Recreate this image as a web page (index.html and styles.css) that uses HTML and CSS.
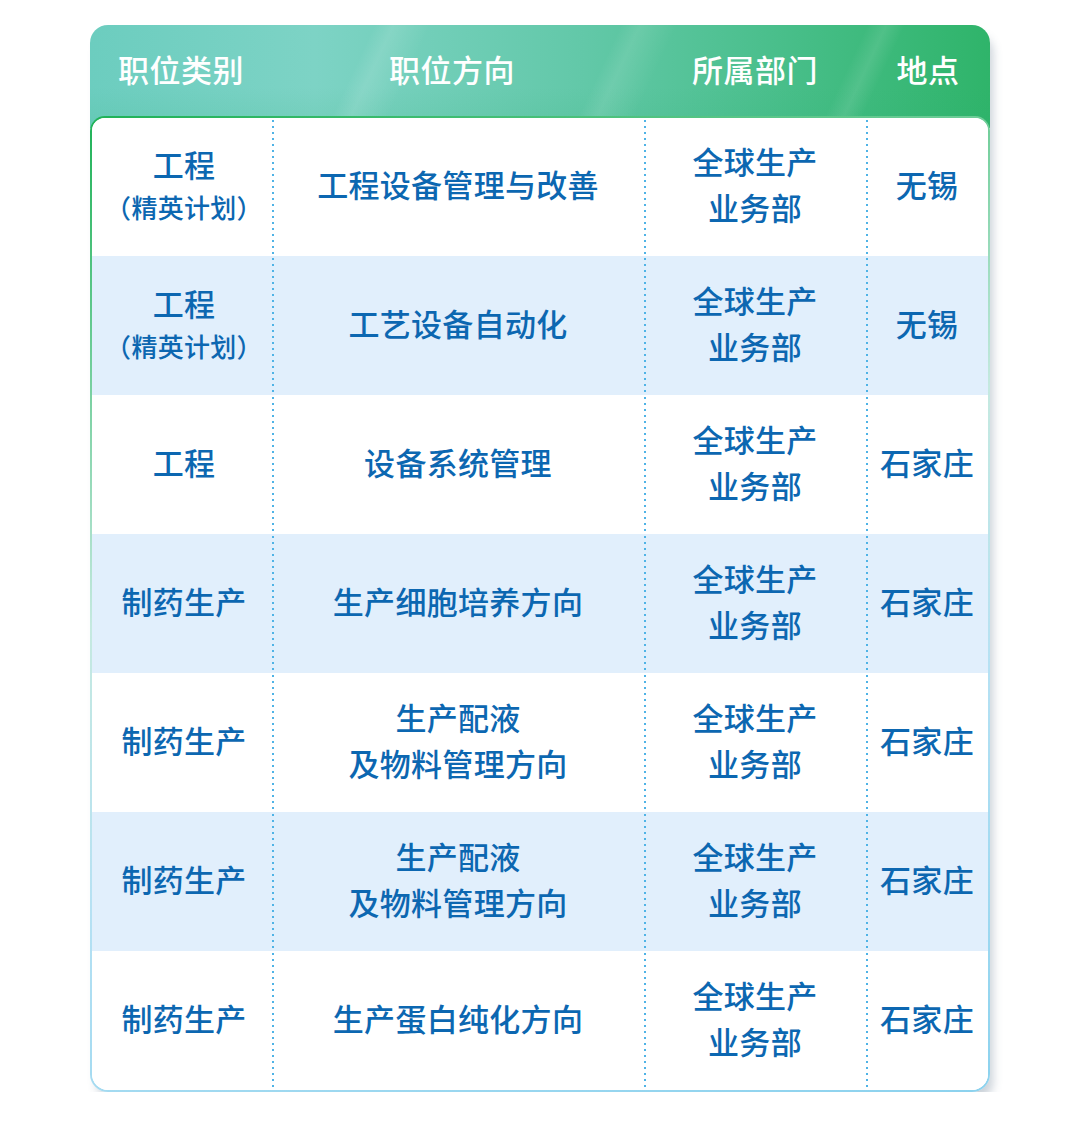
FILE: index.html
```html
<!DOCTYPE html>
<html lang="zh">
<head>
<meta charset="utf-8">
<link rel="stylesheet" href="styles.css">
</head>
<body>
<div class="page">
  <div class="card">
    <div class="head">
      <div class="hc">职位类别</div>
      <div class="hc h2">职位方向</div>
      <div class="hc">所属部门</div>
      <div class="hc">地点</div>
    </div>
    <div class="body">
      <div class="row first">
        <div class="c f"><span>工程</span><span class="sm">（精英计划）</span></div>
        <div class="c d">工程设备管理与改善</div>
        <div class="c d">全球生产<br>业务部</div>
        <div class="c d">无锡</div>
      </div>
      <div class="row alt">
        <div class="c f"><span>工程</span><span class="sm">（精英计划）</span></div>
        <div class="c d">工艺设备自动化</div>
        <div class="c d">全球生产<br>业务部</div>
        <div class="c d">无锡</div>
      </div>
      <div class="row">
        <div class="c f">工程</div>
        <div class="c d">设备系统管理</div>
        <div class="c d">全球生产<br>业务部</div>
        <div class="c d">石家庄</div>
      </div>
      <div class="row alt">
        <div class="c f">制药生产</div>
        <div class="c d">生产细胞培养方向</div>
        <div class="c d">全球生产<br>业务部</div>
        <div class="c d">石家庄</div>
      </div>
      <div class="row">
        <div class="c f">制药生产</div>
        <div class="c d">生产配液<br>及物料管理方向</div>
        <div class="c d">全球生产<br>业务部</div>
        <div class="c d">石家庄</div>
      </div>
      <div class="row alt">
        <div class="c f">制药生产</div>
        <div class="c d">生产配液<br>及物料管理方向</div>
        <div class="c d">全球生产<br>业务部</div>
        <div class="c d">石家庄</div>
      </div>
      <div class="row">
        <div class="c f">制药生产</div>
        <div class="c d">生产蛋白纯化方向</div>
        <div class="c d">全球生产<br>业务部</div>
        <div class="c d">石家庄</div>
      </div>
    </div>
  </div>
</div>
</body>
</html>
```

FILE: styles.css
```css
html, body {
  margin: 0;
  padding: 0;
  background: #ffffff;
}
body {
  font-family: "Noto Sans CJK SC", "Noto Sans", sans-serif;
}
.page {
  padding: 25px 90px 0 90px;
  width: 900px;
}
.card {
  width: 900px;
  border-radius: 18px;
  box-shadow: 5px 9px 10px -2px rgba(70, 95, 120, 0.28);
}
.head {
  height: 103px;
  border-radius: 18px 18px 0 0;
  background:
    linear-gradient(115deg, rgba(255,255,255,0) 30%, rgba(255,255,255,0.12) 32%, rgba(255,255,255,0) 36%, rgba(255,255,255,0) 56%, rgba(255,255,255,0.10) 58%, rgba(255,255,255,0) 62%, rgba(255,255,255,0) 82%, rgba(255,255,255,0.10) 84%, rgba(255,255,255,0) 86%),
    linear-gradient(180deg, rgba(255,255,255,0) 0%, rgba(255,255,255,0) 60%, rgba(40,170,110,0.12) 100%),
    linear-gradient(90deg, #6ccdbf 0%, #7dd3c5 25%, #62c8a8 55%, #45bd86 80%, #2fb46a 100%);
  display: grid;
  grid-template-columns: 182px 372px 222px 124px;
  padding-bottom: 16px;
  box-sizing: border-box;
}
.hc {
  display: flex;
  align-items: center;
  justify-content: center;
  color: #ffffff;
  font-size: 31px;
  font-weight: 500;
  letter-spacing: 0.5px;
}
.hc.h2 {
  padding-right: 12px;
}
.body {
  margin-top: -12px;
  border: 2px solid transparent;
  border-radius: 15px 15px 18px 18px;
  background:
    linear-gradient(#ffffff, #ffffff) padding-box,
    linear-gradient(165deg, #1fb257 0%, #6fcd98 20%, #c5e9e0 42%, #b6e1f3 65%, #8cd2ee 100%) border-box;
  overflow: hidden;
}
.row {
  display: grid;
  grid-template-columns: 180px 372px 222px 122px;
  height: 139px;
  background: #ffffff;
}
.row.first {
  height: 138px;
}
.row.alt {
  background: #e1effc;
}
.c {
  display: flex;
  flex-direction: column;
  align-items: center;
  justify-content: center;
  text-align: center;
  color: #0c67b1;
  font-size: 31px;
  font-weight: 500;
  line-height: 46px;
  letter-spacing: 0.3px;
  padding-bottom: 6px;
  box-sizing: border-box;
}
.c.f {
  padding-left: 4px;
}
.c.d {
  background-image: linear-gradient(180deg, #4fb3e6 0, #4fb3e6 2px, transparent 2px);
  background-size: 2px 6px;
  background-repeat: repeat-y;
  background-position: 0 2px;
}
.c .sm {
  font-size: 26px;
  line-height: 40px;
}
```
